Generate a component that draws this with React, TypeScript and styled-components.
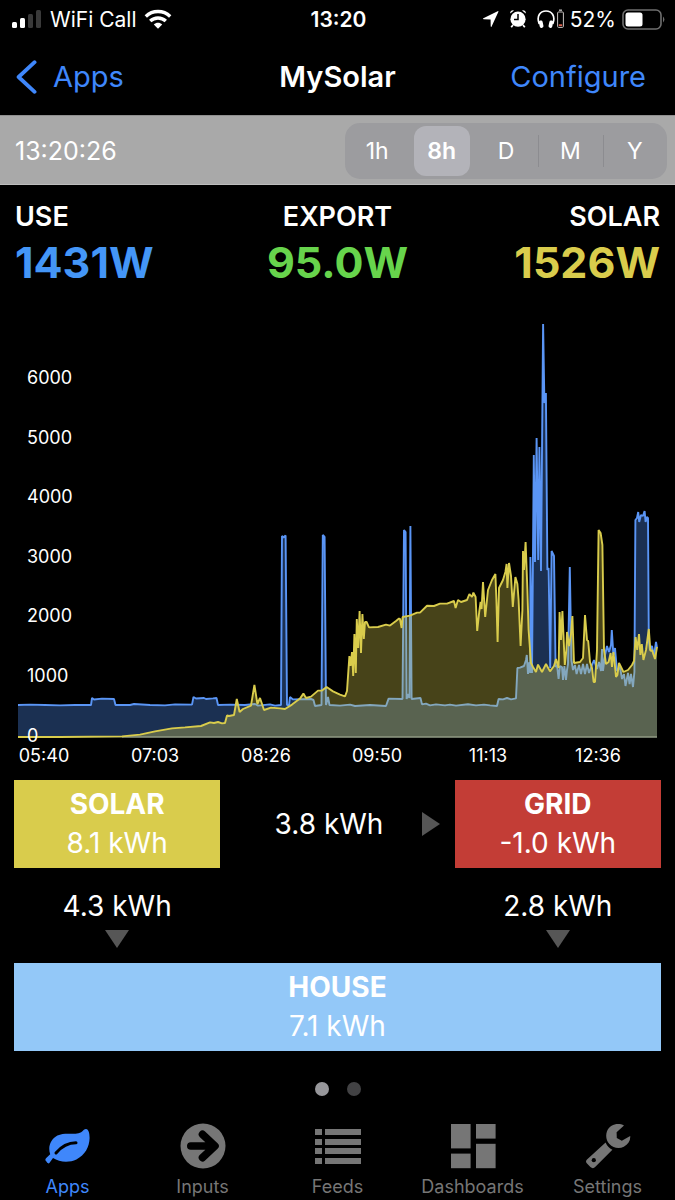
import React, { useState } from "react";
import styled, { createGlobalStyle } from "styled-components";

const GlobalStyle = createGlobalStyle`
  * { box-sizing: border-box; }
  body {
    margin: 0;
    background: #000;
    color: #fff;
    font-family: Inter, "Liberation Sans", sans-serif;
  }
  button { font: inherit; border: 0; background: none; padding: 0; cursor: pointer; }
  a { color: inherit; text-decoration: none; }
  h1, h2, p, dl, dt, dd { margin: 0; font-size: inherit; font-weight: inherit; }
  svg { display: block; }
`;

const blue = "#3f87fb";

const Screen = styled.div`
  display: flex;
  flex-direction: column;
  min-height: 100vh;
`;

const ThreeColumns = styled.div`
  display: grid;
  grid-template-columns: 1fr auto 1fr;
  align-items: center;
`;

const StatusBar = styled(ThreeColumns)`
  height: 38px;
  padding: 0 10px 0 12px;
  font-size: 21px;
`;

const StatusGroup = styled.div<{ $end?: boolean }>`
  display: flex;
  align-items: center;
  gap: ${(p) => (p.$end ? "6px" : "8px")};
  justify-content: ${(p) => (p.$end ? "flex-end" : "flex-start")};
`;

const Clock = styled.time`
  font-weight: 600;
`;

const Devices = styled.div`
  display: flex;
  align-items: center;
  gap: 10px;
`;

const NavBar = styled(ThreeColumns)`
  height: 77px;
  padding: 0 16px;
  font-size: 29px;
`;

const NavLink = styled.a`
  display: flex;
  align-items: center;
  gap: 16px;
  color: ${blue};
  justify-self: start;
`;

const NavButton = styled.button`
  margin-right: 13px;
  color: ${blue};
  justify-self: end;
`;

const Title = styled.h1`
  font-weight: 600;
`;

const Toolbar = styled.div`
  display: flex;
  align-items: center;
  justify-content: space-between;
  height: 70px;
  padding: 2px 8px 0 15px;
  background: #a9a9a9;
  border-top: 1px solid #8f8f8f;
  border-bottom: 1px solid #bdbdbd;
  font-size: 25px;
`;

const Segments = styled.fieldset`
  display: grid;
  grid-template-columns: repeat(5, 1fr);
  width: 322px;
  height: 56px;
  margin: 0;
  padding: 3px 0;
  border: 0;
  border-radius: 15px;
  background: #9c9c9f;
`;

const Segment = styled.label<{ $divided: boolean }>`
  display: flex;
  align-items: center;
  justify-content: center;
  position: relative;
  font-size: 23px;
  cursor: pointer;

  &::before {
    content: "";
    position: absolute;
    left: 0;
    top: 9px;
    bottom: 9px;
    width: 1px;
    background: ${(p) => (p.$divided ? "#8c8c90" : "transparent")};
  }
  input {
    position: absolute;
    opacity: 0;
  }
  span {
    display: flex;
    align-items: center;
    justify-content: center;
    width: 56px;
    height: 50px;
    border-radius: 12px;
  }
  input:checked + span {
    background: #b3b3b9;
    font-weight: 600;
  }
`;

const Metrics = styled.dl`
  display: grid;
  grid-template-columns: repeat(3, 1fr);
  padding: 16px 15px 9px;
`;

const Metric = styled.div<{ $align: string; $color: string }>`
  text-align: ${(p) => p.$align};

  dt {
    font-size: 27px;
    font-weight: 600;
    line-height: 32px;
  }
  dd {
    color: ${(p) => p.$color};
    font-size: 43px;
    font-weight: 700;
    line-height: 58px;
  }
`;

const Chart = styled.svg`
  width: 100%;
  height: auto;

  text {
    fill: #fff;
    font-size: 18px;
  }
`;

const Flow = styled.section`
  display: grid;
  grid-template-columns: 206fr 234fr 206fr;
  padding: 9px 14px 0;
  font-size: 28px;
`;

const Box = styled.div<{ $color: string; $wide?: boolean }>`
  grid-column: ${(p) => (p.$wide ? "1 / -1" : "auto")};
  height: 88px;
  padding: 5px 0;
  background: ${(p) => p.$color};
  text-align: center;
  line-height: 39px;

  h2 {
    font-weight: 700;
  }
`;

const FlowRight = styled.div`
  display: flex;
  align-items: center;
  padding-right: 15px;

  p {
    flex: 1;
    padding-left: 16px;
    text-align: center;
  }
`;

const FlowDown = styled.div<{ $column: number }>`
  grid-column: ${(p) => p.$column};
  display: flex;
  flex-direction: column;
  align-items: center;
  height: 95px;
  padding-top: 18px;
  line-height: 40px;
  gap: 4px;
`;

const Pager = styled.div`
  display: flex;
  justify-content: center;
  gap: 18px;
  padding: 31px 0 27px;
`;

const Dot = styled.button<{ $active?: boolean }>`
  width: 14px;
  height: 14px;
  border-radius: 50%;
  background: ${(p) => (p.$active ? "#97979b" : "#424244")};
`;

const TabBar = styled.nav`
  display: grid;
  grid-template-columns: repeat(5, 1fr);
`;

const Tab = styled.a<{ $active?: boolean }>`
  display: flex;
  flex-direction: column;
  align-items: center;
  gap: 6px;
  color: ${(p) => (p.$active ? blue : "#767676")};
  font-size: 18px;
  line-height: 24px;
`;

/* ---- status icons ---- */

const Signal = () => (
  <svg width="30" height="20" viewBox="0 0 30 20" fill="#fff">
    <rect x="0" y="13" width="5" height="6" rx="1.5" />
    <rect x="8" y="9" width="5" height="10" rx="1.5" />
    <rect x="16" y="5" width="5" height="14" rx="1.5" fill="#3a3a3a" />
    <rect x="24" y="1" width="5" height="18" rx="1.5" fill="#3a3a3a" />
  </svg>
);

const Wifi = () => (
  <svg width="28" height="20" viewBox="0 0 28 20" fill="none" stroke="#fff" strokeWidth="3.4">
    <path d="M1.8 7.4 C8.6 .9 19.4 .9 26.2 7.4" />
    <path d="M6.2 12 C10.6 7.9 17.4 7.9 21.8 12" />
    <path d="M9.8 15.6 C12.2 13.2 15.8 13.2 18.2 15.6 L14 19.8 Z" fill="#fff" stroke="none" />
  </svg>
);

const LocationArrow = () => (
  <svg width="17" height="18" viewBox="0 0 17 18" fill="#fff">
    <path d="M15.6 1.2 Q16.8 .8 16.3 2 L9.6 16.4 Q8.9 17.6 8.7 16 L8.6 9.4 L1.6 9.3 Q.2 9 1.4 8.3 Z" />
  </svg>
);

const Alarm = () => (
  <svg width="18" height="20" viewBox="0 0 18 20">
    <path d="M1.2 4.4 A2.8 2.8 0 0 1 5 1.4 Z M13 1.4 A2.8 2.8 0 0 1 16.8 4.4 Z" fill="#fff" />
    <path d="M4 16 L2.2 18.2 M14 16 L15.8 18.2" stroke="#fff" strokeWidth="1.8" fill="none" />
    <circle cx="9" cy="10.2" r="7.6" fill="#fff" />
    <path d="M9 5 V10.6 H5" stroke="#000" strokeWidth="1.5" fill="none" />
  </svg>
);

const Headphones = () => (
  <svg width="27" height="20" viewBox="0 0 27 20">
    <path d="M2.2 15 C-.8 7 3.2 2 9 2 C14.8 2 18.8 7 15.8 15" stroke="#fff" strokeWidth="1.7" fill="none" />
    <rect x="2.2" y="11.5" width="3.8" height="7.5" rx="1.7" fill="#fff" transform="rotate(-12 4 15)" />
    <rect x="12" y="11.5" width="3.8" height="7.5" rx="1.7" fill="#fff" transform="rotate(12 14 15)" />
    <path d="M22 1.2 H25" stroke="#bbb" strokeWidth="1.4" />
    <rect x="20.6" y="3" width="5.8" height="15.4" rx="1" stroke="#c9c4c2" strokeWidth="1" fill="none" />
    <path d="M21.8 16.2 H25.2" stroke="#e0654f" strokeWidth="1.8" />
  </svg>
);

const Battery = () => (
  <svg width="43" height="21" viewBox="0 0 43 21">
    <rect x="1" y="1" width="38" height="19" rx="5" stroke="#6f6f6f" strokeWidth="1.6" fill="none" />
    <rect x="3.5" y="3.5" width="17" height="14" rx="2.5" fill="#fff" />
    <path d="M41 7.5 Q43.8 10.5 41 13.5 Z" fill="#6f6f6f" />
  </svg>
);

const BackChevron = () => (
  <svg width="21" height="34" viewBox="0 0 21 34" fill="none" stroke={blue} strokeWidth="3.8" strokeLinecap="round" strokeLinejoin="round">
    <path d="M18.6 2.2 L2.6 17 L18.6 31.8" />
  </svg>
);

/* ---- tab icons ---- */

const Leaf = () => (
  <svg width="45" height="46" viewBox="0 0 45 46">
    <path
      d="M1 38 Q-.5 36.5 1.5 34.8 L5.2 31.2 C2.6 24 5.6 16.4 12.4 12.6 C19 9.2 27 11.6 33.5 10.2 C38 9.2 38.6 5.8 41 6 C43.6 6.4 44.6 10 44.6 15 C44.4 24 40 32 31.4 36.4 C24.4 39.8 14.6 39.4 8 35 L4.6 39.8 Q3 41.6 1 38 Z"
      fill={blue}
    />
    <path d="M11 30 C16.5 23.5 22 19.8 31 19.8" stroke="#000" strokeWidth="3" strokeLinecap="round" fill="none" />
  </svg>
);

const ArrowCircle = () => (
  <svg width="46" height="46" viewBox="0 0 46 46">
    <circle cx="23" cy="23" r="22.5" fill="currentColor" />
    <path d="M10.8 23 H34 M22.5 11.4 L35 23 L22.5 34.6" stroke="#000" strokeWidth="7.6" strokeLinecap="round" strokeLinejoin="round" fill="none" />
  </svg>
);

const List = () => (
  <svg width="46" height="46" viewBox="0 0 46 46" fill="currentColor">
    {[6, 16, 25, 35].map((y) => (
      <g key={y}>
        <rect x="0" y={y} width="7" height="6" />
        <rect x="10" y={y} width="36" height="6" />
      </g>
    ))}
  </svg>
);

const Tiles = () => (
  <svg width="46" height="46" viewBox="0 0 46 46" fill="currentColor">
    <rect x="1" y="1" width="19.6" height="24.4" />
    <rect x="26" y="1" width="19.6" height="14.6" />
    <rect x="1" y="30.6" width="19.6" height="14.6" />
    <rect x="26" y="20.8" width="19.6" height="24.4" />
  </svg>
);

const Wrench = () => (
  <svg width="46" height="46" viewBox="0 0 46 46" fill="currentColor">
    <path d="M39 2.4 C33 -.8 25 1.2 22 8.2 C20.4 12.6 21.2 17.4 24.4 21 C28 25 34 26.4 38.8 23.8 C43.4 21.2 45.6 17.6 45.2 13 L36.8 17.8 L31.8 15 L31.6 9.2 Z" />
    <path d="M20.6 19.6 Q22.6 24.6 27.4 26.8 L10.4 43.8 Q8 46.4 5.4 44 L2 40.6 Q0 38.6 2 36.4 Z" />
    <circle cx="8.8" cy="37.2" r="2.1" fill="#000" />
  </svg>
);

const TriangleRight = () => (
  <svg width="18" height="24" viewBox="0 0 18 24" fill="#565656">
    <path d="M0 0 L18 12 L0 24 Z" />
  </svg>
);

const TriangleDown = () => (
  <svg width="24" height="18" viewBox="0 0 24 18" fill="#565656">
    <path d="M0 0 H24 L12 18 Z" />
  </svg>
);

/* ---- power history, as "x y" samples in chart units ---- */

const useSamples = `18 705 30 704.6 45 705 60 705.4 75 705 91 705 92 698 94 699.5 102 698.6 114 699 115.5 705 130 705 134 704
  150 705 165 705.4 175 704.4 192 704.6 193.5 697 196 698.5 204 698 206 699 213 698.4 216.5 698 218 705 230 704.6 245 705
  255 704 258 705.6 270 704.4 275 705.6 281 705 282 536 283.5 537.5 285.6 535.5 287 705 289 705 290 697 293 699.4 311 699 313.5 700 315 706
  321.5 705 322.8 535 324.6 537 326 705 328 697 329.5 705 340 705.6 350 704.6 355 706 370 705 386 706 388.6 698.6 402.5 699
  404 530 405.6 532 406.6 699 408.5 694 409.4 698 410.4 526 411.6 699 420.5 698 422 704.4 426 703.6 430 705.4 436 704.4
  445 705.4 450 704.6 456 705.6 468 704.2 476 705.4 484 704.6 490 705.4 497 706 498.6 699 503 699.4 507 698 511 699.4 516 698.4
  517.4 668 520 667.6 524 666 526 660 526.8 655 528 674 529.4 662 530.2 673 530.4 557 532 673 533.8 455 535 562 536.6 438 538.2 560 539.4 447
  541 571 543.1 324 544.4 403 545.9 393 547.4 570 548.6 568 550.2 668 551.6 551 554 556 555.6 667 557 665 558.6 679 560 666 562 667
  563 680 564.4 666 566 680 567 670 568 664 569.8 567 571.4 660 573 670 575 665 576.6 674 579 665 581 674 583 664 585 674 587 664
  589 673 592 665 594 660 597 669 599 662 601 671 602 649 603 671 605 655 607 646 609 652 611 645 611.8 630 613.4 655 615 648 617 671
  620 667 622 679 624 674 625.5 686 628 673 629.6 684 631 674 633 687 634.4 672 635.4 520 637 518 638.2 512 639.2 522 641 515 643 516
  644.6 511 645.6 522 646.8 517 648 518 648.8 640 650 650 652 646 654 656 656 642 657 648`;

const solarSamples = `18 737 60 737 122 736.4 140 734.6 155 731.4 172 728.4 185 727.4 201 726 210 722.4 214 723 218 722 222 723.4
  225 723 227 715.4 229 716 234 715 236.8 699 239.6 712 243 709 251 705.6 254.4 685 257.4 704 260 698 264 710 271 707.6 280 708.4
  285 709 292 704.6 300 698.6 303.4 693.6 306 698 311 696.6 318 690.6 322 690.6 326.6 687 333 691.4 340 694.6 345 696.4 347 691
  349.4 656 350.6 666 352 652 353.2 676 354.4 634 355.8 673 356.8 619 358.2 648 359.6 611 361 653 362.4 614 363.8 639 365 622
  366.6 622 369 627.4 378 627 386 624.6 390 625.6 396 621 399 618.6 400 619 401.6 628 402.6 617 410 615.6 417 612.6 420 612.6
  427 605.8 434 606 440 603.6 447 603.6 454 601 455.6 608 458 600 461 602 467 600 469.4 594 472 597 473.4 592.6 475.6 597 477.2 631
  479.2 612 480.6 602 481.6 609 483 582 485.2 617 488 590 492 580 495.4 574 496.4 600 497.6 642 499 588 503 580 505.4 572 506.6 564
  507.4 588 509 563 511 576 512.8 607 515.4 577 517.4 584 518.6 600 520.6 646 522.4 610 523 551 524 570 525.6 542 527.4 590
  528.6 630 531 663 533 667 536 672 538 664.6 542 672 546 664 550 671.4 554 666 556 659 558.6 668 559.6 612 561 640 562.4 611
  564.8 665 566.4 650 567 632 569 646 571 634 572.4 616 574 663 580 662 583 658 585 615 587 640 588.2 641 590 662 592 668 593.6 682
  595 682 597 650 598.6 530 600.6 533 602.4 545 604 650 606 664 608.6 662 610.6 653 612 667 613.4 652 614.6 662 616 677 617.4 675
  619 663 621 667 623.4 672 628 670 632 665 634 661 635.6 637 637.2 650 639 634 640.4 655 641.8 644 643.4 660 646 650 648.8 629
  650.4 651 652 650 655 659 657 647`;

const solarColor = "#d9cc4c";
const useColor = "#5a95f5";
const toLine = (samples: string) => "M" + samples.trim().split(/\s+/).join(" ");
const toArea = (samples: string) => `${toLine(samples)} L657 737.5 L18 737.5 Z`;

const xLabels: [string, number][] = [
  ["05:40", 44], ["07:03", 155], ["08:26", 266], ["09:50", 377], ["11:13", 488], ["12:36", 598],
];

const PowerChart = () => (
  <Chart viewBox="0 300 675 471" role="img" aria-label="Power over the last 8 hours">
    <path d={toArea(useSamples)} fill="#1b3052" />
    <path d={toLine(useSamples)} fill="none" stroke={useColor} strokeWidth="1.9" strokeLinejoin="bevel" />
    <path d={toArea(solarSamples)} fill={solarColor} fillOpacity="0.33" />
    <path d="M122 737 H657" stroke="#adb59b" strokeWidth="1.2" />
    <path d={toLine(solarSamples)} fill="none" stroke={solarColor} strokeWidth="1.9" strokeLinejoin="bevel" />
    {[6000, 5000, 4000, 3000, 2000, 1000, 0].map((value, i) => (
      <text key={value} x="27" y={Math.round(384 + i * 59.6)}>{value}</text>
    ))}
    {xLabels.map(([label, x]) => (
      <text key={label} x={x} y="762" textAnchor="middle">{label}</text>
    ))}
  </Chart>
);

const ranges = ["1h", "8h", "D", "M", "Y"];

const tabs = [
  { label: "Apps", Icon: Leaf },
  { label: "Inputs", Icon: ArrowCircle },
  { label: "Feeds", Icon: List },
  { label: "Dashboards", Icon: Tiles },
  { label: "Settings", Icon: Wrench },
];

export default function App() {
  const [range, setRange] = useState("8h");
  const selected = ranges.indexOf(range);

  return (
    <Screen>
      <GlobalStyle />
      <StatusBar>
        <StatusGroup>
          <Signal />
          <span>WiFi Call</span>
          <Wifi />
        </StatusGroup>
        <Clock>13:20</Clock>
        <StatusGroup $end>
          <Devices>
            <LocationArrow />
            <Alarm />
            <Headphones />
          </Devices>
          <span>52%</span>
          <Battery />
        </StatusGroup>
      </StatusBar>

      <NavBar as="header">
        <NavLink href="#apps">
          <BackChevron />
          Apps
        </NavLink>
        <Title>MySolar</Title>
        <NavButton type="button">Configure</NavButton>
      </NavBar>

      <Toolbar>
        <time>13:20:26</time>
        <Segments aria-label="Time range">
          {ranges.map((r, i) => (
            <Segment key={r} $divided={i > 0 && i !== selected && i !== selected + 1}>
              <input type="radio" name="range" value={r} checked={r === range} onChange={() => setRange(r)} />
              <span>{r}</span>
            </Segment>
          ))}
        </Segments>
      </Toolbar>

      <Metrics>
        <Metric $align="left" $color="#4496f7">
          <dt>USE</dt>
          <dd>1431W</dd>
        </Metric>
        <Metric $align="center" $color="#67d44c">
          <dt>EXPORT</dt>
          <dd>95.0W</dd>
        </Metric>
        <Metric $align="right" $color={solarColor}>
          <dt>SOLAR</dt>
          <dd>1526W</dd>
        </Metric>
      </Metrics>

      <PowerChart />

      <Flow>
        <Box $color={solarColor}>
          <h2>SOLAR</h2>
          <p>8.1 kWh</p>
        </Box>
        <FlowRight>
          <p>3.8 kWh</p>
          <TriangleRight />
        </FlowRight>
        <Box $color="#c33d36">
          <h2>GRID</h2>
          <p>-1.0 kWh</p>
        </Box>
        <FlowDown $column={1}>
          <p>4.3 kWh</p>
          <TriangleDown />
        </FlowDown>
        <FlowDown $column={3}>
          <p>2.8 kWh</p>
          <TriangleDown />
        </FlowDown>
        <Box $color="#93c8f8" $wide>
          <h2>HOUSE</h2>
          <p>7.1 kWh</p>
        </Box>
      </Flow>

      <Pager>
        <Dot type="button" $active aria-label="Page 1" />
        <Dot type="button" aria-label="Page 2" />
      </Pager>

      <TabBar>
        {tabs.map(({ label, Icon }, i) => (
          <Tab key={label} href={`#${label.toLowerCase()}`} $active={i === 0}>
            <Icon />
            {label}
          </Tab>
        ))}
      </TabBar>
    </Screen>
  );
}
